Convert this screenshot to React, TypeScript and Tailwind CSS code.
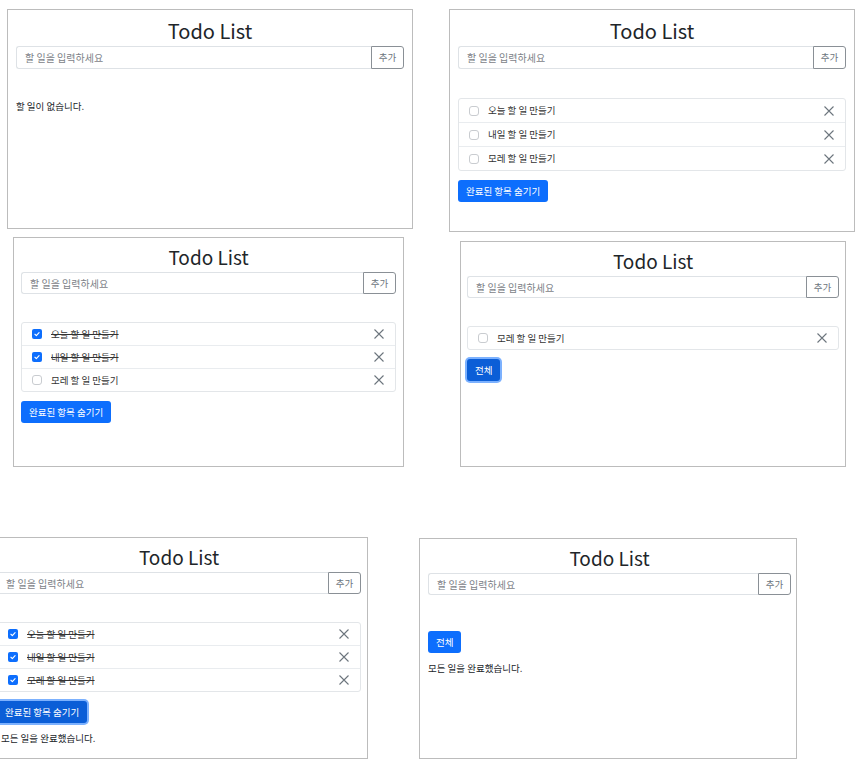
type Todo = { text: string; done: boolean };

const FONT = "font-['Noto_Sans_CJK_KR','Noto_Sans',sans-serif]";

const VARIANTS = {
  a: {
    top: "pt-[8px]",
    title: "text-[20px] leading-[25px]",
    input: "h-[23px]",
    list: "mt-[29px]",
    row: "h-[23px]",
  },
  b: {
    top: "pt-[7px]",
    title: "text-[19px] leading-[24px]",
    input: "h-[22px]",
    list: "mt-[28px]",
    row: "h-[22px]",
  },
};

const ALL: Todo[] = [
  { text: "오늘 할 일 만들기", done: false },
  { text: "내일 할 일 만들기", done: false },
  { text: "모레 할 일 만들기", done: false },
];

function Check({ on }: { on: boolean }) {
  if (!on) {
    return (
      <span className="h-[10px] w-[10px] shrink-0 rounded-[3px] border border-[#c9ccd0] bg-white" />
    );
  }
  return (
    <span className="flex h-[10px] w-[10px] shrink-0 items-center justify-center rounded-[2px] bg-[#0d6efd]">
      <svg viewBox="0 0 10 10" className="h-[8px] w-[8px]">
        <path
          d="M2.4 5.3l1.8 1.7 3.4-3.8"
          stroke="white"
          strokeWidth="1.4"
          fill="none"
          strokeLinecap="round"
          strokeLinejoin="round"
        />
      </svg>
    </span>
  );
}

function CloseIcon() {
  return (
    <svg viewBox="0 0 10 10" className="h-[10px] w-[10px] shrink-0">
      <path d="M0.5 0.5L9.5 9.5M9.5 0.5L0.5 9.5" stroke="#6c757d" strokeWidth="1.1" />
    </svg>
  );
}

function Panel({
  pos,
  pad,
  v,
  items,
  button,
  focused = false,
  message,
  msgPad = "",
}: {
  pos: string;
  pad: string;
  v: "a" | "b";
  items: Todo[];
  button?: "hide" | "all";
  focused?: boolean;
  message?: string;
  msgPad?: string;
}) {
  const s = VARIANTS[v];
  return (
    <div className={`absolute overflow-hidden border border-[#bcbcbc] bg-white ${pos} ${pad} ${s.top}`}>
      <h1 className={`text-center font-normal text-[#212529] ${s.title}`}>Todo List</h1>
      <div className={`mt-[3px] flex ${s.input}`}>
        <div className="flex flex-1 items-center rounded-l-[3px] border border-r-0 border-[#dee2e6] px-[8px] text-[10px] text-[#7d8288]">
          할 일을 입력하세요
        </div>
        <div className="flex w-[33px] items-center justify-center rounded-r-[3px] border border-[#8a9096] text-[9.5px] text-[#6c757d]">
          추가
        </div>
      </div>

      {items.length > 0 && (
        <div className={`rounded-[3px] border border-[#e3e6e9] ${s.list}`}>
          {items.map((t, i) => (
            <div
              key={t.text}
              className={`flex items-center pl-[10px] pr-[11px] ${s.row} ${
                i < items.length - 1 ? "box-content border-b border-[#e9ecef]" : ""
              }`}
            >
              <Check on={t.done} />
              <span
                className={`ml-[9px] flex-1 text-[9.5px] text-[#333] ${t.done ? "line-through" : ""}`}
              >
                {t.text}
              </span>
              <CloseIcon />
            </div>
          ))}
        </div>
      )}

      {button && (
        <div className={`flex ${items.length > 0 ? "mt-[9px]" : "mt-[36px]"}`}>
          <span
            className={`flex h-[22px] items-center rounded-[3px] px-[8px] text-[9.5px] text-white ${
              focused ? "bg-[#0b5ed7] shadow-[0_0_0_2px_rgba(110,168,254,0.9)]" : "bg-[#0d6efd]"
            }`}
          >
            {button === "hide" ? "완료된 항목 숨기기" : "전체"}
          </span>
        </div>
      )}

      {message && (
        <p
          className={`text-[9.5px] leading-[12px] text-[#212529] ${msgPad} ${
            button ? "mt-[9px]" : "mt-[31px]"
          }`}
        >
          {message}
        </p>
      )}
    </div>
  );
}

export default function App() {
  const partly = ALL.map((t, i) => ({ ...t, done: i < 2 }));
  const allDone = ALL.map((t) => ({ ...t, done: true }));

  return (
    <div className={`relative h-[780px] w-[860px] overflow-hidden bg-white ${FONT}`}>
      <Panel
        pos="left-[7px] top-[9px] h-[220px] w-[406px]"
        pad="px-[8px]"
        v="a"
        items={[]}
        message="할 일이 없습니다."
      />
      <Panel
        pos="left-[449px] top-[9px] h-[223px] w-[406px]"
        pad="px-[8px]"
        v="a"
        items={ALL}
        button="hide"
      />
      <Panel
        pos="left-[13px] top-[237px] h-[230px] w-[391px]"
        pad="px-[7px]"
        v="b"
        items={partly}
        button="hide"
      />
      <Panel
        pos="left-[460px] top-[241px] h-[226px] w-[386px]"
        pad="px-[6px]"
        v="b"
        items={[ALL[2]]}
        button="all"
        focused
      />
      <Panel
        pos="left-[-7px] top-[537px] h-[222px] w-[375px]"
        pad="pl-[3px] pr-[6px]"
        v="b"
        items={allDone}
        button="hide"
        focused
        message="모든 일을 완료했습니다."
        msgPad="pl-[4px]"
      />
      <Panel
        pos="left-[419px] top-[538px] h-[221px] w-[378px]"
        pad="pl-[8px] pr-[5px]"
        v="b"
        items={[]}
        button="all"
        message="모든 일을 완료했습니다."
      />
    </div>
  );
}
